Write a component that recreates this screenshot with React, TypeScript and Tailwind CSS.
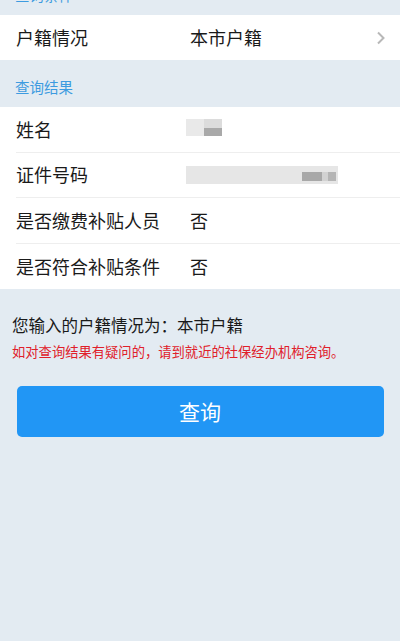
import React from "react";

const font = { fontFamily: '"Noto Sans CJK SC", "Noto Sans", sans-serif' };

function Row({ label, children, last }: { label: string; children?: React.ReactNode; last?: boolean }) {
  return (
    <div className="pl-4 bg-white">
      <div className={`h-[45.5px] flex items-center ${last ? "" : "border-b border-[#eeeeee]"}`}>
        <div className="w-[174px] text-[18px] text-[#1a1a1a]">{label}</div>
        <div className="flex-1 flex items-center text-[18px] text-[#1a1a1a]">{children}</div>
      </div>
    </div>
  );
}

export default function App() {
  return (
    <div className="w-[400px] h-[641px] bg-[#e3ebf2] overflow-hidden" style={font}>
      <div className="h-[15px] relative overflow-hidden">
        <div className="absolute left-[15px] top-[-12px] text-[14.5px] text-[#3d9be0] leading-none">查询条件</div>
      </div>
      <div className="bg-white h-[45px] pl-4 pr-[14px] flex items-center">
        <div className="w-[174px] text-[18px] text-[#1a1a1a]">户籍情况</div>
        <div className="flex-1 text-[18px] text-[#1a1a1a]">本市户籍</div>
        <svg width="10" height="14" viewBox="0 0 10 14">
          <path d="M2 1.5 L7.5 7 L2 12.5" fill="none" stroke="#b8b8b8" strokeWidth="2" />
        </svg>
      </div>
      <div className="h-[47px] pl-[15px] pt-[17px] text-[14.5px] text-[#3d9be0] leading-[20px]">查询结果</div>
      <Row label="姓名">
        <div className="flex mt-[-4px] ml-[-4px]">
          <div className="w-[18px] h-[17px] bg-[#e9e9e9]" />
          <div className="flex flex-col">
            <div className="w-[18px] h-[9px] bg-[#dcdcdc]" />
            <div className="w-[18px] h-[8px] bg-[#a9a9a9]" />
          </div>
        </div>
      </Row>
      <Row label="证件号码">
        <div className="relative ml-[-4px] w-[152px] h-[18px] bg-[#e6e6e6]">
          <div className="absolute left-[116px] top-[6px] w-[20px] h-[9px] bg-[#a8a8a8]" />
          <div className="absolute left-[136px] top-[6px] w-[6px] h-[9px] bg-[#d2d2d2]" />
          <div className="absolute left-[142px] top-[6px] w-[8px] h-[9px] bg-[#b5b5b5]" />
        </div>
      </Row>
      <Row label="是否缴费补贴人员">否</Row>
      <Row label="是否符合补贴条件" last>否</Row>
      <div className="pl-3 pt-[24px] text-[16.5px] text-[#1a1a1a] leading-[24px]">您输入的户籍情况为：本市户籍</div>
      <div className="pl-3 pt-[5px] text-[13.3px] text-[#e0202a] leading-[20px]">如对查询结果有疑问的，请到就近的社保经办机构咨询。</div>
      <div className="px-[16.5px] pt-[24px]">
        <div className="h-[51px] rounded-[5px] bg-[#2196f5] flex items-center justify-center text-white text-[21px]">查询</div>
      </div>
    </div>
  );
}
